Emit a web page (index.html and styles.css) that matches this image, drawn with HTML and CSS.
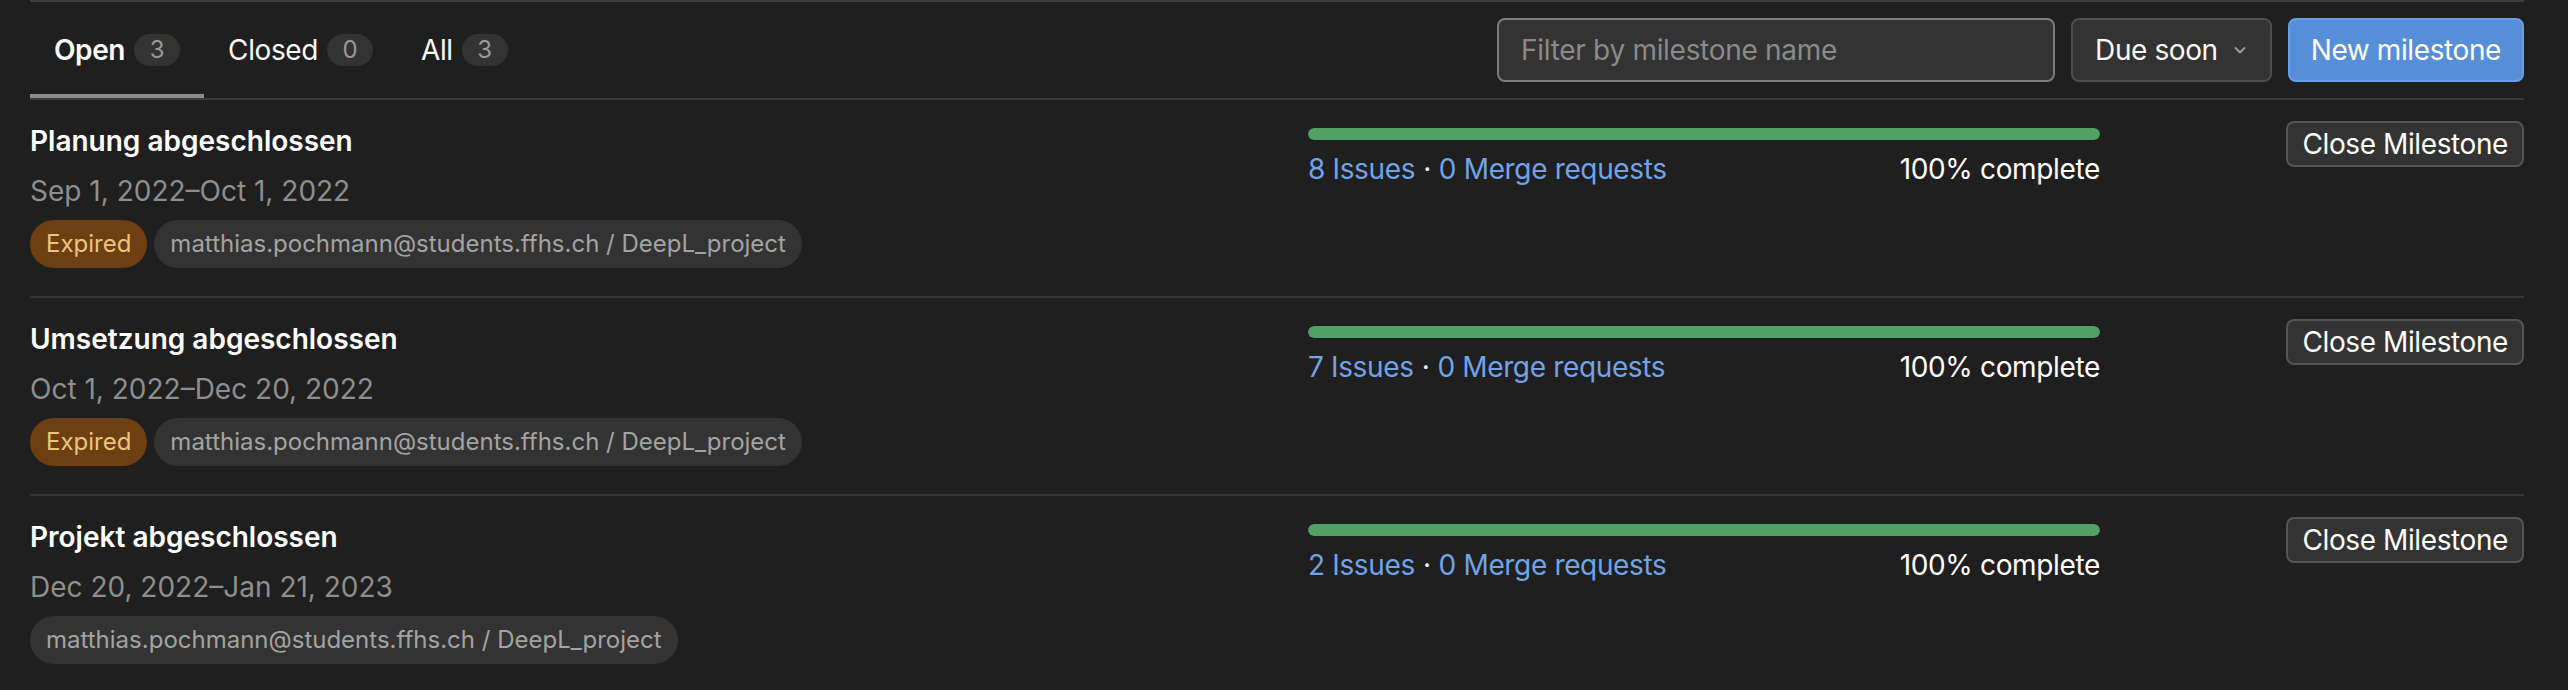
FILE: index.html
```html
<!DOCTYPE html>
<html lang="en">
<head>
<meta charset="utf-8">
<title>Milestones</title>
<link rel="stylesheet" href="styles.css">
</head>
<body>
<div class="page">
  <div class="top-area">
    <ul class="tabs">
      <li class="tab active"><span class="tab-label">Open</span><span class="count">3</span></li>
      <li class="tab"><span class="tab-label">Closed</span><span class="count">0</span></li>
      <li class="tab"><span class="tab-label">All</span><span class="count">3</span></li>
    </ul>
    <div class="actions">
      <input class="filter" type="text" placeholder="Filter by milestone name">
      <button class="dropdown">Due soon
        <svg class="chev" viewBox="0 0 16 16" width="16" height="16"><path d="M3.5 6l4.5 4.5L12.5 6" fill="none" stroke="currentColor" stroke-width="2" stroke-linecap="round" stroke-linejoin="round"/></svg>
      </button>
      <button class="btn-primary">New milestone</button>
    </div>
  </div>

  <ul class="milestones">
    <li class="milestone">
      <div class="col-title">
        <div class="title">Planung abgeschlossen</div>
        <div class="dates">Sep 1, 2022–Oct 1, 2022</div>
        <div class="badges">
          <span class="badge expired">Expired</span>
          <span class="badge ns">matthias.pochmann@students.ffhs.ch / DeepL_project</span>
        </div>
      </div>
      <div class="col-progress">
        <div class="progress"><div class="bar" style="width:100%"></div></div>
        <div class="stats">
          <span class="links"><a href="#">8 Issues</a><span class="dot">·</span><a href="#">0 Merge requests</a></span>
          <span class="pct">100% complete</span>
        </div>
      </div>
      <div class="col-actions"><button class="btn">Close Milestone</button></div>
    </li>
    <li class="milestone">
      <div class="col-title">
        <div class="title">Umsetzung abgeschlossen</div>
        <div class="dates">Oct 1, 2022–Dec 20, 2022</div>
        <div class="badges">
          <span class="badge expired">Expired</span>
          <span class="badge ns">matthias.pochmann@students.ffhs.ch / DeepL_project</span>
        </div>
      </div>
      <div class="col-progress">
        <div class="progress"><div class="bar" style="width:100%"></div></div>
        <div class="stats">
          <span class="links"><a href="#">7 Issues</a><span class="dot">·</span><a href="#">0 Merge requests</a></span>
          <span class="pct">100% complete</span>
        </div>
      </div>
      <div class="col-actions"><button class="btn">Close Milestone</button></div>
    </li>
    <li class="milestone">
      <div class="col-title">
        <div class="title">Projekt abgeschlossen</div>
        <div class="dates">Dec 20, 2022–Jan 21, 2023</div>
        <div class="badges">
          <span class="badge ns">matthias.pochmann@students.ffhs.ch / DeepL_project</span>
        </div>
      </div>
      <div class="col-progress">
        <div class="progress"><div class="bar" style="width:100%"></div></div>
        <div class="stats">
          <span class="links"><a href="#">2 Issues</a><span class="dot">·</span><a href="#">0 Merge requests</a></span>
          <span class="pct">100% complete</span>
        </div>
      </div>
      <div class="col-actions"><button class="btn">Close Milestone</button></div>
    </li>
  </ul>
</div>
</body>
</html>
```

FILE: styles.css
```css
* { box-sizing: border-box; }

html, body {
  margin: 0;
  padding: 0;
  background: #1f1f1f;
}

body {
  font-family: Inter, "Noto Sans", "Liberation Sans", sans-serif;
  font-size: 28px;
  line-height: 40px;
  color: #ececec;
}

.page {
  width: 2494px;
  margin-left: 30px;
}

.top-area {
  display: flex;
  align-items: center;
  justify-content: space-between;
  border-top: 2px solid #3d3d3d;
  border-bottom: 2px solid #3a3a3a;
  height: 100px;
}

.tabs {
  display: flex;
  list-style: none;
  margin: 0;
  padding: 0;
  height: 96px;
}

.tab {
  display: flex;
  align-items: center;
  padding: 0 24px;
  height: 96px;
  color: #fafafa;
  letter-spacing: -0.4px;
}

.tab.active {
  font-weight: 600;
  box-shadow: inset 0 -4px 0 #8b8b8b;
}

.count {
  display: inline-flex;
  align-items: center;
  justify-content: center;
  height: 32px;
  min-width: 46px;
  padding: 0 14px;
  margin-left: 9px;
  border-radius: 16px;
  background: #333333;
  color: #9a9a9a;
  font-size: 24px;
  font-weight: 400;
  letter-spacing: 0;
}

.actions {
  display: flex;
  align-items: center;
  gap: 16px;
}

.filter {
  width: 558px;
  height: 64px;
  padding: 0 22px;
  background: #333333;
  border: 2px solid #7c7c7c;
  border-radius: 8px;
  font: inherit;
  color: #ececec;
  outline: none;
}

.filter::placeholder { color: #8a8a8a; letter-spacing: -0.3px; }

.dropdown {
  display: flex;
  align-items: center;
  gap: 14px;
  height: 64px;
  padding: 0 22px;
  white-space: nowrap;
  background: #333333;
  border: 2px solid #4e4e4e;
  border-radius: 8px;
  font: inherit;
  letter-spacing: -0.4px;
  color: #fafafa;
}

.chev {
  color: #9a9a9a;
}

.btn-primary {
  height: 64px;
  padding: 0 21px;
  white-space: nowrap;
  background: #568ed8;
  border: 2px solid #6a9ee6;
  border-radius: 8px;
  font: inherit;
  letter-spacing: -0.4px;
  color: #ffffff;
}

.milestones {
  list-style: none;
  margin: 0;
  padding: 0;
}

.milestone {
  display: flex;
  align-items: flex-start;
  border-bottom: 2px solid #353535;
  padding: 21px 0 28px;
}

.col-title {
  width: 1278px;
  flex: none;
}

.title {
  font-weight: 600;
  color: #ffffff;
}

.dates {
  margin-top: 10px;
  color: #8e8e8e;
}

.badges {
  display: flex;
  gap: 7px;
  margin-top: 9px;
}

.badge {
  display: inline-flex;
  align-items: center;
  height: 48px;
  padding: 0 16px;
  border-radius: 24px;
  font-size: 24px;
}

.badge.expired {
  background: #6d3f12;
  color: #ebc47e;
}

.badge.ns {
  background: #333333;
  color: #a3a3a3;
}

.col-progress {
  width: 792px;
  flex: none;
  padding-top: 7px;
}

.progress {
  height: 12px;
  border-radius: 6px;
  background: #333333;
  overflow: hidden;
}

.bar {
  height: 100%;
  background: #52a068;
  border-radius: 6px;
}

.stats {
  display: flex;
  justify-content: space-between;
  margin-top: 9px;
  letter-spacing: -0.35px;
}

.links a {
  color: #72a3e6;
  text-decoration: none;
}

.dot {
  margin: 0 8px;
  color: #ececec;
}

.pct {
  color: #ffffff;
}

.col-actions {
  flex: 1;
  display: flex;
  justify-content: flex-end;
}

.btn {
  height: 46px;
  padding: 0 14px;
  white-space: nowrap;
  background: #333333;
  border: 2px solid #555555;
  border-radius: 8px;
  font: inherit;
  line-height: 40px;
  letter-spacing: -0.4px;
  color: #ffffff;
}
```
